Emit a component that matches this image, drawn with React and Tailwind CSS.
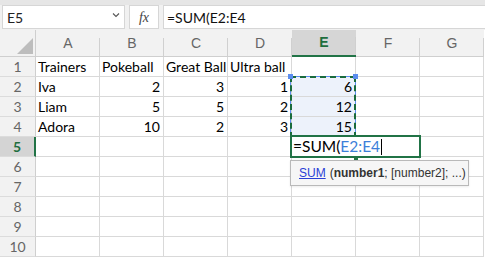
import React from 'react';

const cols = ['A', 'B', 'C', 'D', 'E', 'F', 'G'];

// row data: first column is text (left aligned), rest numbers (right aligned)
const rows = [
    ['Trainers', 'Pokeball', 'Great Ball', 'Ultra ball', '', '', ''],
    ['Iva', 2, 3, 1, 6, '', ''],
    ['Liam', 5, 5, 2, 12, '', ''],
    ['Adora', 10, 2, 3, 15, '', ''],
    ['', '', '', '', '', '', ''],
    ['', '', '', '', '', '', ''],
    ['', '', '', '', '', '', ''],
    ['', '', '', '', '', '', ''],
    ['', '', '', '', '', '', ''],
    ['', '', '', '', '', '', ''],
];

const cellFont = { fontFamily: 'Lato, "Open Sans", sans-serif' };

export default function App() {
    return (
        <div className="w-[485px] h-[258px] overflow-hidden bg-white" style={cellFont}>
            {/* formula bar */}
            <div className="h-[30px] bg-[#f1f1f1] border-t-[5px] border-[#e6e6e6] flex items-stretch gap-[4px] pl-[2px] pb-px">
                <div className="w-[123px] bg-white border border-[#d6d6d6] flex items-center justify-between pl-[4px] pr-[4px]">
                    <span className="text-[14px] text-[#222]">E5</span>
                    <svg width="8" height="6" viewBox="0 0 8 6" className="mb-[4px]">
                        <path d="M1 1.5 L4 4.5 L7 1.5" fill="none" stroke="#555" strokeWidth="1.1" />
                    </svg>
                </div>
                <div className="w-[30px] bg-white border border-[#d6d6d6] flex items-center justify-center">
                    <span className="italic text-[14px] text-[#444]" style={{ fontFamily: '"Liberation Serif", serif' }}>fx</span>
                </div>
                <div className="flex-1 bg-white border border-[#d6d6d6] border-r-0 flex items-center pl-[3px]">
                    <span className="text-[14px] text-[#111]">=SUM(E2:E4</span>
                </div>
            </div>

            <div className="relative">
                <div className="grid grid-cols-[36px_repeat(7,64px)] grid-rows-[27px_repeat(10,20px)]">
                    {/* corner */}
                    <div className="bg-[#f2f2f2] border-r border-b border-[#cfcfcf] flex items-end justify-end pr-[2px] pb-[2px]">
                        <svg width="16" height="16" viewBox="0 0 16 16">
                            <polygon points="16,0 16,16 0,16" fill="#bdbdbd" />
                        </svg>
                    </div>
                    {cols.map((c) => (
                        <div
                            key={c}
                            className={`relative flex items-end justify-center pb-[2px] text-[14px] ${
                                c === 'E'
                                    ? 'bg-[#d6d6d6] text-[#1e6e3e] font-bold border-b-2 border-[#217346]'
                                    : 'bg-[#f2f2f2] text-[#666] border-b border-[#cfcfcf]'
                            } after:absolute after:right-0 after:bottom-0 after:h-[18px] after:w-px after:bg-[#d0d0d0]`}
                            style={{ fontFamily: '"Liberation Sans", sans-serif' }}
                        >
                            {c}
                        </div>
                    ))}

                    {rows.map((r, i) => (
                        <React.Fragment key={i}>
                            <div
                                className={`flex items-center justify-center text-[14px] border-b border-[#dcdcdc] ${
                                    i === 4
                                        ? 'bg-[#d4d4d4] text-[#1e6e3e] font-bold border-r-2 border-r-[#217346]'
                                        : 'bg-[#f2f2f2] text-[#666] border-r border-r-[#cfcfcf]'
                                }`}
                            >
                                {i + 1}
                            </div>
                            {r.map((v, j) => (
                                <div
                                    key={j}
                                    className={`border-r border-b border-[#d9d9d9] text-[14px] leading-[20px] text-black whitespace-nowrap overflow-visible ${
                                        typeof v === 'number' ? 'text-right pr-[3px]' : 'text-left pl-[2px]'
                                    } ${j === 4 && i >= 1 && i <= 3 ? 'bg-[#edf2fb]' : ''}`}
                                >
                                    {v}
                                </div>
                            ))}
                        </React.Fragment>
                    ))}
                </div>

                {/* referenced range E2:E4 */}
                <div className="absolute left-[290px] top-[46px] w-[66px] h-[62px] border border-[#5b8def]" />
                <div className="absolute left-[290px] top-[46px] w-[66px] h-[62px] border-2 border-dashed border-[#1a6b3c]" />
                <div className="absolute left-[288px] top-[44px] w-[5px] h-[5px] bg-[#5b8def]" />
                <div className="absolute left-[353px] top-[44px] w-[5px] h-[5px] bg-[#5b8def]" />

                {/* in-cell editor */}
                <div className="absolute left-[290px] top-[105px] w-[131px] h-[23px] bg-white border-2 border-[#217346] flex items-center pl-[1px] text-[15.5px] leading-none whitespace-nowrap">
                    <span className="text-black">=SUM(</span>
                    <span className="text-[#3d7fd9]">E2:E4</span>
                    <span className="ml-px w-px h-[16px] bg-black" />
                </div>
                <div className="absolute left-[354px] top-[127px] w-[4px] h-[3px] bg-[#217346]" />

                {/* function tooltip */}
                <div className="absolute left-[290px] top-[130px] w-[179px] h-[26px] bg-[#f6f6f6] border border-[#b9b9b9] shadow-[0_1px_2px_rgba(0,0,0,0.08)] flex items-center pl-[8px] text-[12px] text-[#333] whitespace-nowrap" style={{ fontFamily: '"Liberation Sans", sans-serif' }}>
                    <span className="text-[#2a3fd6] underline">SUM</span>
                    <span className="ml-[4px]">(</span>
                    <span className="font-bold">number1</span>
                    <span>; [number2]; ...)</span>
                </div>
            </div>
        </div>
    );
}
